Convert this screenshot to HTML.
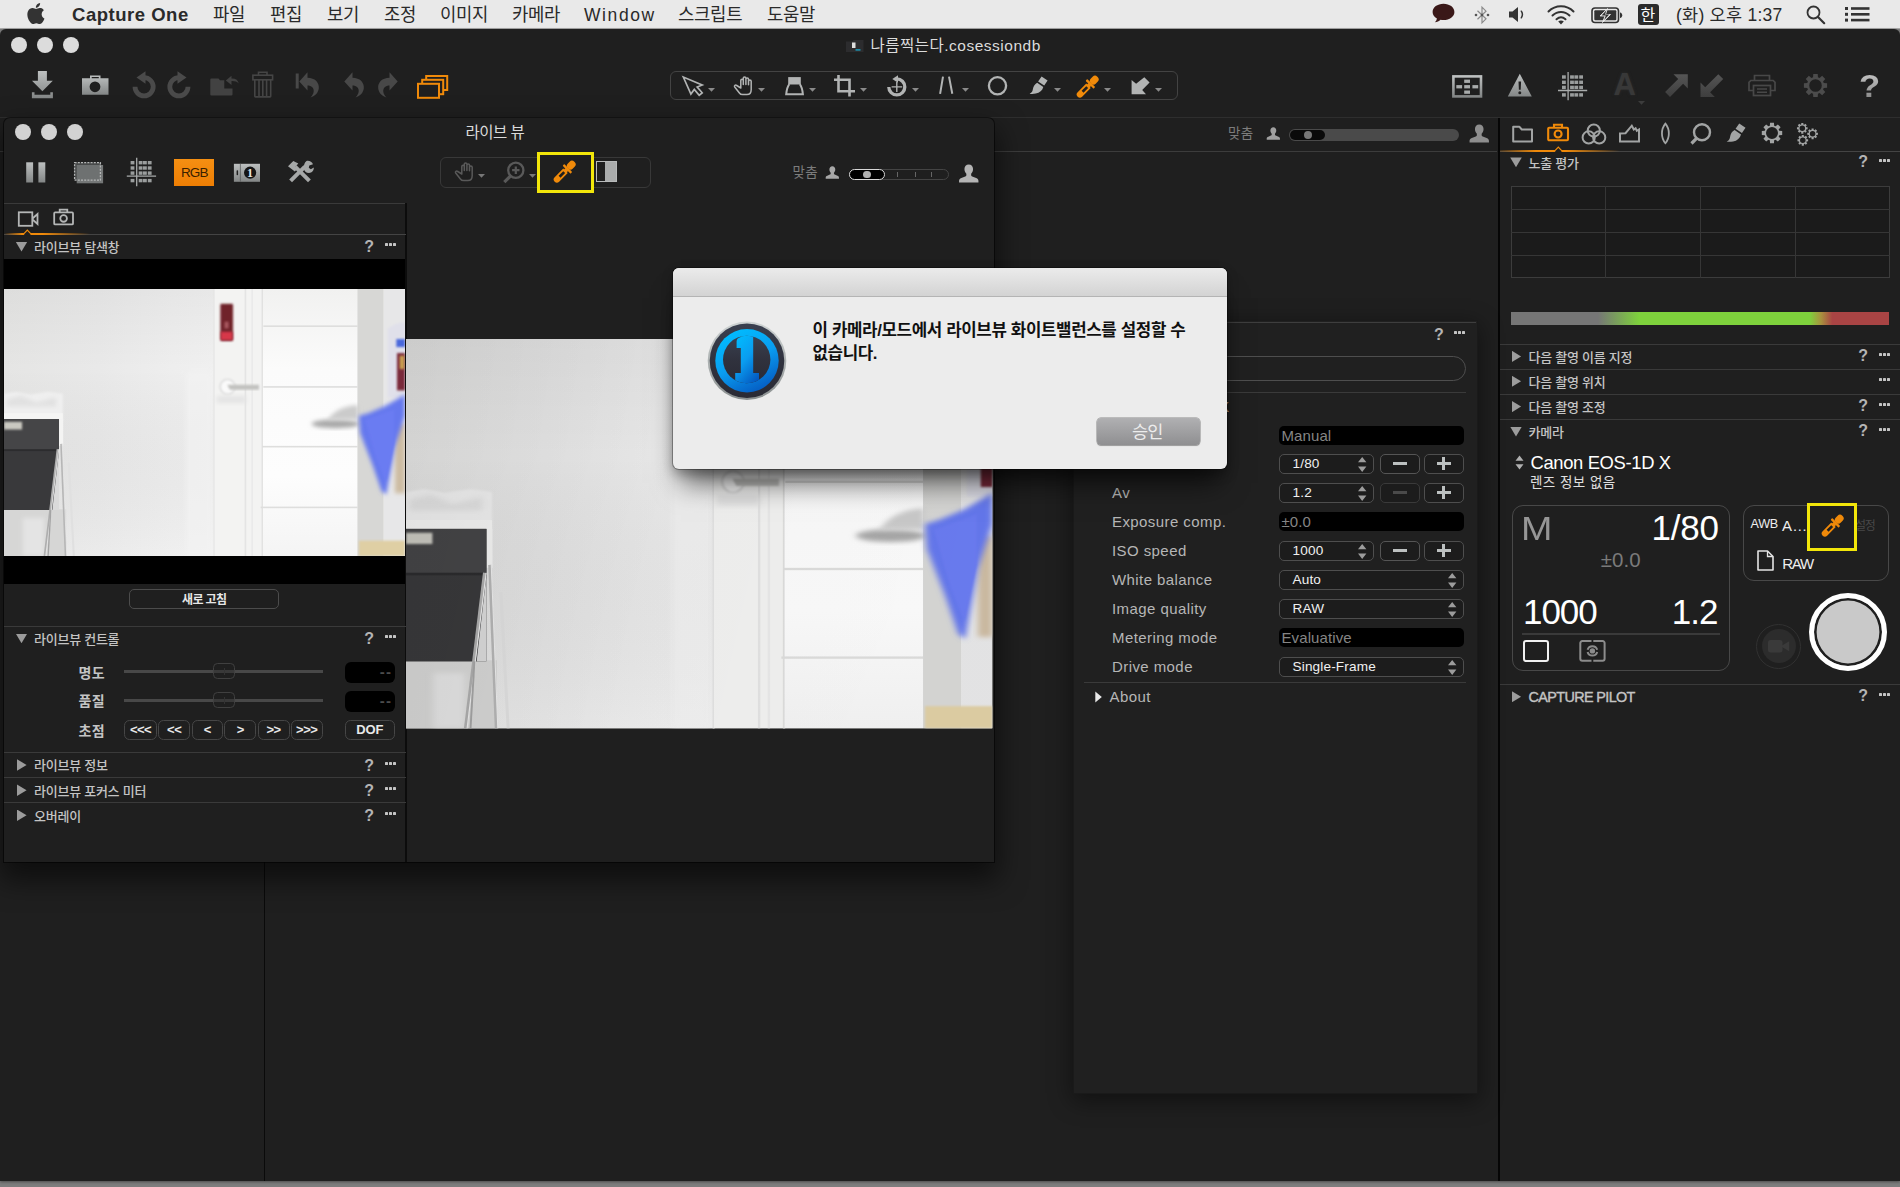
<!DOCTYPE html>
<html lang="ko"><head><meta charset="utf-8"><title>Capture One</title>
<style>
*{box-sizing:border-box;margin:0;padding:0}
html,body{width:1900px;height:1187px;overflow:hidden}
body{position:relative;background:#7d7d7d;font-family:"Liberation Sans","Noto Sans CJK KR",sans-serif;color:#ccc;font-size:13px;line-height:1}
.abs{position:absolute}
svg{position:absolute;overflow:visible}
.t{position:absolute;white-space:nowrap}
#menubar{position:absolute;left:0;top:0;width:1900px;height:29px;background:#e9e9e9;border-bottom:1px solid #a8a8a8;color:#222}
#menubar .t{font-size:17.5px;top:4px;line-height:20px;color:#2a2a2a}
#mainwin{position:absolute;left:0;top:29px;width:1900px;height:1152px;background:#1f1f1f;border-radius:6px 6px 0 0;box-shadow:0 1px 3px rgba(0,0,0,.4)}
.tl{position:absolute;width:16px;height:16px;border-radius:50%;background:#dcdcdc}
.hline{position:absolute;height:1.6px;background:#3b3b3b}
.vline{position:absolute;width:1px;background:#000}
.hdr{position:absolute;font-size:13px;letter-spacing:-.25px;font-weight:500;color:#c4c4c4;line-height:16px;white-space:nowrap}
.tri-d{position:absolute;width:11.6px;height:9.8px;background:#9c9c9c;clip-path:polygon(0 0,100% 0,50% 100%);margin-left:-.3px}
.tri-r{position:absolute;width:9.6px;height:11.6px;background:#9c9c9c;clip-path:polygon(0 0,100% 50%,0 100%);margin-top:-.3px}
.q{position:absolute;font-size:16px;font-weight:bold;color:#b4b4b4;line-height:16px}
.dots{position:absolute;width:11px;height:3px}
.dots i{position:absolute;top:0;width:3px;height:3px;background:#c4c4c4;border-radius:.6px}

.lab{font-size:15px;line-height:19px;color:#b6b6b6;letter-spacing:.42px}
.blk{width:185px;height:19px;background:#000;border-radius:5px}
.blk span{position:absolute;left:3px;top:0;font-size:15px;line-height:19px;color:#858585;letter-spacing:.1px}
.sel{height:20px;border:1px solid #4e4e4e;border-radius:5px;background:#1c1c1c}
.sel span{position:absolute;top:-1.200px;font-size:13.600px;letter-spacing:.15px;line-height:19px;color:#f0f0f0}
.btn{width:39.500px;height:20px;border:1px solid #4e4e4e;border-radius:5px;background:#1c1c1c}
.btn i{position:absolute;display:block}

.sl{font-size:14px;line-height:18px;font-weight:bold;color:#c4c4c4;letter-spacing:.3px}
.fb{height:20.500px;border:1px solid #464646;border-radius:5.500px;text-align:center;font-size:13px;line-height:18.500px;font-weight:bold;color:#e8e8e8;letter-spacing:-.5px}

</style></head>
<body>
<!-- defs.html -->
<svg width="0" height="0" style="position:absolute">
<defs>
<linearGradient id="gLite" x1="0" y1="0" x2="0" y2="1"><stop offset="0" stop-color="#bdc0c0"/><stop offset="1" stop-color="#838686"/></linearGradient>
<linearGradient id="gDim" x1="0" y1="0" x2="0" y2="1"><stop offset="0" stop-color="#555"/><stop offset="1" stop-color="#3e3e3e"/></linearGradient>
<linearGradient id="gOr" x1="0" y1="0" x2="0" y2="1"><stop offset="0" stop-color="#f59a1c"/><stop offset="1" stop-color="#e67a08"/></linearGradient>
</defs>
</svg>
<svg width="0" height="0" style="position:absolute">
<defs>
<g id="pip"><rect x="-3.500" y="0" width="7" height="9" rx="3.300"/><rect x="-5.500" y="8.700" width="11" height="2.300" rx=".7"/><rect x="-1.900" y="10.500" width="3.800" height="3"/><path fill-rule="evenodd" d="M-3.100 12.500h6.200v11.900a3.100 3.100 0 0 1-6.200 0zM-1.300 14.300v6.400h2.600v-6.400z"/></g>
<g id="person"><path d="M10 .5c2.600 0 4.300 1.900 4.300 4.600 0 1.900-.8 3.600-1.900 4.600v1.500c0 .7.400 1.100 1.100 1.400l3.900 1.500c1.600.6 2.300 1.500 2.300 3v1.400H.3v-1.400c0-1.500.7-2.400 2.300-3l3.900-1.500c.7-.3 1.100-.7 1.100-1.400V9.700C6.500 8.700 5.700 7 5.700 5.100 5.700 2.400 7.400 .5 10 .5z"/></g>
</defs>
</svg>
<svg width="0" height="0" style="position:absolute">
<defs>
<filter id="b1" x="-20%" y="-20%" width="140%" height="140%"><feGaussianBlur stdDeviation="1.2"/></filter>
<filter id="b2" x="-30%" y="-30%" width="160%" height="160%"><feGaussianBlur stdDeviation="3"/></filter>
<filter id="b3" x="-30%" y="-30%" width="160%" height="160%"><feGaussianBlur stdDeviation="6"/></filter>
<linearGradient id="wallg" x1="0" y1="0" x2="1" y2="0"><stop offset="0" stop-color="#e5e5e4"/><stop offset=".45" stop-color="#e9e9e9"/><stop offset=".8" stop-color="#eeeeee"/><stop offset="1" stop-color="#f0f0f0"/></linearGradient>
<linearGradient id="wallv" x1="0" y1="0" x2="0" y2="1"><stop offset="0" stop-color="#000" stop-opacity=".035"/><stop offset=".3" stop-color="#000" stop-opacity="0"/><stop offset="1" stop-color="#fff" stop-opacity=".1"/></linearGradient>
<linearGradient id="doorg" x1="0" y1="0" x2="0" y2="1"><stop offset="0" stop-color="#f1f1f0"/><stop offset=".3" stop-color="#fbfbfb"/><stop offset=".7" stop-color="#fdfdfd"/><stop offset="1" stop-color="#f4f4f4"/></linearGradient>
<symbol id="photo" viewBox="0 0 600 400" preserveAspectRatio="none">
<rect width="600" height="400" fill="#e9e9e8"/>
<rect width="316" height="400" fill="url(#wallg)"/>
<rect width="316" height="400" fill="url(#wallv)"/>
<rect x="272" y="125" width="40" height="275" fill="#f3f3f3" opacity=".65" filter="url(#b2)"/>
<!-- door frame -->
<rect x="314" y="0" width="74" height="400" fill="#f3f3f2"/>
<rect x="313.500" y="0" width="1.500" height="400" fill="#e2e2e2"/>
<rect x="360" y="0" width="2.500" height="400" fill="#e4e4e4"/>
<rect x="370" y="0" width="2.500" height="400" fill="#eaeaea"/>
<!-- door -->
<rect x="386" y="0" width="143" height="400" fill="url(#doorg)"/>
<g fill="#dededd"><rect x="388" y="54.500" width="141" height="2.400"/><rect x="388" y="145.500" width="141" height="2.400"/><rect x="386" y="235" width="143" height="2.400"/><rect x="384" y="326" width="145" height="2.400"/><rect x="385.500" y="0" width="1.800" height="400"/></g>
<!-- right region -->
<rect x="529" y="0" width="39" height="400" fill="#d7d7d5"/>
<rect x="568" y="0" width="32" height="400" fill="#e7e7e8"/>
<path d="M574 60c8-8 18-10 26-10v112h-26z" fill="#e0e0ea" filter="url(#b1)"/>
<rect x="587" y="75" width="13" height="12" fill="#4a68dc" filter="url(#b1)"/>
<rect x="588" y="96" width="12" height="56" fill="#7a2a3a" filter="url(#b1)"/>
<rect x="592" y="100" width="7" height="20" fill="#c9a050" filter="url(#b1)"/>
<rect x="585" y="202" width="15" height="104" fill="#cdbca2" filter="url(#b2)"/>
<rect x="531" y="377" width="69" height="23" fill="#dfcfa4" filter="url(#b1)"/>
<!-- red box -->
<rect x="323.700" y="22" width="19" height="56" rx="2" fill="#70202a" filter="url(#b1)"/>
<rect x="324.500" y="64" width="17.500" height="12.500" fill="#d6384a" filter="url(#b1)"/>
<rect x="330" y="49" width="6" height="10" fill="#a85860" filter="url(#b1)"/>
<!-- handle -->
<rect x="318" y="160" width="44" height="11" fill="#e4e4e4" filter="url(#b2)"/>
<circle cx="334.500" cy="146.500" r="11" fill="#fafafa" stroke="#d6d6d6" stroke-width="2" filter="url(#b1)"/>
<path d="M334 143.500h47.500v7.500H338z" fill="#c2c2c0" filter="url(#b1)"/>
<!-- plastic + black box + chair -->
<path d="M0 157l18-3 22 4 26-4 22 3v40H0z" fill="#efefef" filter="url(#b1)"/>
<path d="M4 165l22-5 22 10 30-8v14H4z" fill="#d6d6d6" opacity=".55" filter="url(#b2)"/>
<rect x="0" y="186" width="88" height="10" fill="#f5f5f4"/>
<rect x="0" y="330" width="93" height="70" fill="#d6d6d5"/>
<rect x="28" y="343" width="32" height="57" fill="#e4e4e4" filter="url(#b2)"/>
<rect x="82" y="195" width="6.500" height="40" fill="#f4f4f3"/>
<rect x="0" y="195" width="82.300" height="136" fill="#3a3a3c"/>
<rect x="0" y="195" width="82.300" height="46" fill="#454547"/>
<rect x="0" y="240" width="82.300" height="3" fill="#2c2c2e"/>
<path d="M0 243h82.300l-10 88H0z" fill="#39393b"/>
<path d="M72.300 331l10-88v88z" fill="#dadada"/>
<rect x="0" y="199" width="27" height="11.500" fill="#cac9c1" filter="url(#b1)"/>
<g stroke-linecap="butt" fill="none"><path d="M80.500 240L61 400" stroke="#aeaeae" stroke-width="3.500"/><path d="M82 240L62.500 400" stroke="#ededed" stroke-width="1.200"/><path d="M85.700 232l6.700 168" stroke="#b6b6b6" stroke-width="3.200"/><path d="M87.200 232l6.700 168" stroke="#f0f0f0" stroke-width="1"/><path d="M70 331l-4 69" stroke="#a4a4a4" stroke-width="2"/><path d="M97 260l7.500 140" stroke="#e0e0e0" stroke-width="3"/></g>
<!-- shoe shadow -->
<ellipse cx="496" cy="202" rx="36" ry="6.500" fill="#a9a9a9" filter="url(#b2)"/>
<path d="M484 196c8-12 24-22 46-22v22z" fill="#cbcbcb" filter="url(#b2)"/>
<!-- blue blob -->
<path d="M531 190L545 186 571 175 600 158V190L585 236 572 308 565 303 552 265 533 216z" fill="#6578ee" filter="url(#b2)"/>
<path d="M540 196L584 180 584 232 571 290 556 252z" fill="#6a7cf2" filter="url(#b1)"/>
</symbol>
</defs>
</svg>
<svg width="0" height="0" style="position:absolute"><defs>
<linearGradient id="bigshade" x1="0" y1="0" x2="1" y2=".15"><stop offset="0" stop-color="#000" stop-opacity=".08"/><stop offset=".5" stop-color="#000" stop-opacity=".03"/><stop offset="1" stop-color="#000" stop-opacity=".02"/></linearGradient>
</defs></svg>

<!-- menubar.html -->
<div id="menubar">
<svg style="left:27px;top:3px" width="18" height="21" viewBox="3 0 18.2 24"><path fill="#333" d="M12.152 6.896c-.948 0-2.415-1.078-3.96-1.04-2.04.027-3.91 1.183-4.961 3.014-2.117 3.675-.546 9.103 1.519 12.09 1.013 1.454 2.208 3.09 3.792 3.039 1.52-.065 2.09-.987 3.935-.987 1.831 0 2.35.987 3.96.948 1.637-.026 2.676-1.48 3.676-2.948 1.156-1.688 1.636-3.325 1.662-3.415-.039-.013-3.182-1.221-3.22-4.857-.026-3.04 2.48-4.494 2.597-4.559-1.429-2.09-3.623-2.324-4.39-2.376-2-.156-3.675 1.09-4.61 1.09zM15.53 3.83c.843-1.012 1.4-2.427 1.245-3.83-1.207.052-2.662.805-3.532 1.818-.78.896-1.454 2.338-1.273 3.714 1.338.104 2.715-.688 3.559-1.701"/></svg>
<span class="t" id="m0" style="left:72px;font-weight:bold;font-size:18.5px;letter-spacing:.52px;top:4.5px">Capture One</span>
<span class="t" id="m1" style="left:213px;top:5px;font-size:17.8px;letter-spacing:-.3px">파일</span>
<span class="t" id="m2" style="left:270px;top:5px;font-size:17.8px;letter-spacing:-.3px">편집</span>
<span class="t" id="m3" style="left:327px;top:5px;font-size:17.8px;letter-spacing:-.3px">보기</span>
<span class="t" id="m4" style="left:384px;top:5px;font-size:17.8px;letter-spacing:-.3px">조정</span>
<span class="t" id="m5" style="left:440px;top:5px;font-size:17.8px;letter-spacing:-.3px">이미지</span>
<span class="t" id="m6" style="left:512px;top:5px;font-size:17.8px;letter-spacing:-.3px">카메라</span>
<span class="t" id="m7" style="left:584px;letter-spacing:1.6px;top:5px">Window</span>
<span class="t" id="m8" style="left:678px;top:5px;font-size:17.8px;letter-spacing:-.3px">스크립트</span>
<span class="t" id="m9" style="left:767px;top:5px;font-size:17.8px;letter-spacing:-.3px">도움말</span>
<!-- status icons -->
<svg style="left:1432px;top:3px" width="23" height="21" viewBox="0 0 23 21"><path fill="#3a1818" d="M11.5 .8C5.4 .8 .6 4.400 .6 8.900c0 2.700 1.700 5 4.300 6.500-.2 1.500-1 2.900-2.100 3.900 2.300-.1 4.300-1 5.700-2.500 1 .2 2 .3 3 .3 6.100 0 10.900-3.700 10.900-8.200S17.600 .8 11.500 .8z"/></svg>
<svg style="left:1474px;top:5px" width="16" height="20" viewBox="0 0 16 20"><path fill="none" stroke="#8a8a8a" stroke-width="1.2" d="M3.500 5.800 12 13.800 8 17.800V2.200l4 4-8.500 8"/><circle cx="2" cy="10" r="1.300" fill="#555"/><circle cx="14" cy="10" r="1.300" fill="#555"/><circle cx="8" cy="10" r="1.300" fill="#555"/></svg>
<svg style="left:1508px;top:6px" width="19" height="17" viewBox="0 0 19 17"><path fill="#333" d="M1 5.500h3.500L10 1v15L4.500 11.500H1z"/><path fill="none" stroke="#333" stroke-width="1.500" stroke-linecap="round" d="M13.300 5.200c1.300 1.900 1.300 4.700 0 6.600"/></svg>
<svg style="left:1547px;top:4px" width="28" height="21" viewBox="0 0 28 21"><g fill="none" stroke="#333" stroke-width="2" stroke-linecap="round"><path d="M1.500 7.500C8.500 .5 19.500 .5 26.500 7.500"/><path d="M5.500 11.500C10.500 6.700 17.500 6.700 22.500 11.500"/><path d="M9.500 15.300C12.200 12.900 15.800 12.900 18.500 15.300"/></g><path fill="#333" d="M14 20.500l-2.800-3c1.600-1.300 4-1.300 5.600 0z"/></svg>
<svg style="left:1591px;top:7px" width="32" height="17" viewBox="0 0 32 17"><rect x="1" y="1" width="26.500" height="14.500" rx="3" fill="none" stroke="#333" stroke-width="1.600"/><path fill="#333" d="M29 5.500c1.500.3 2.200 1.300 2.200 2.800s-.7 2.500-2.200 2.800z"/><rect x="3.300" y="3.300" width="22" height="10" rx="1" fill="#333"/><path fill="#ececec" stroke="#ececec" stroke-width=".8" d="M16.500 1.500 9 9h5l-2.500 6.500L19.500 7.500h-5z"/><path fill="#333" d="M15.500 3.200 10.500 8.400h4.300l-1.600 4.500 5-5.400h-4.200z"/></svg>
<div class="abs" style="left:1638px;top:4px;width:21px;height:21px;background:#2b2b2b;border-radius:3px"></div>
<span class="t" id="m10" style="left:1640.500px;color:#fff;font-size:16px;top:5.500px">한</span>
<span class="t" id="m11" style="left:1676px;letter-spacing:.25px;top:5px">(화) 오후 1:37</span>
<svg style="left:1806px;top:5px" width="20" height="20" viewBox="0 0 20 20"><circle cx="7.500" cy="7.500" r="6" fill="none" stroke="#333" stroke-width="1.800"/><path stroke="#333" stroke-width="2.200" stroke-linecap="round" d="M12 12l6.200 6.200"/></svg>
<svg style="left:1845px;top:7px" width="25" height="15" viewBox="0 0 25 15"><g fill="#333"><rect x="0" y="0" width="3" height="3"/><rect x="0" y="5.800" width="3" height="3"/><rect x="0" y="11.600" width="3" height="3"/><rect x="6" y=".2" width="18.500" height="2.600"/><rect x="6" y="6" width="18.500" height="2.600"/><rect x="6" y="11.800" width="18.500" height="2.600"/></g></svg>
</div>

<!-- mainwin.html -->
<div id="mainwin"></div>
<div class="tl" style="left:10.500px;top:37px"></div><div class="tl" style="left:36.800px;top:37px"></div><div class="tl" style="left:63px;top:37px"></div>
<!-- title -->
<svg style="left:846px;top:39px" width="18" height="14" viewBox="0 0 18 14"><path fill="#2c2c2e" d="M0 2.500h6l1.500-1.500h10v12H0z"/><rect x="6" y="3.500" width="3.500" height="5.500" fill="#ddd"/><rect x="9.500" y="10.200" width="5" height="1.400" fill="#1aa0c0"/></svg>
<span class="t" id="title" style="left:870.5px;top:36.5px;font-size:15.5px;line-height:18px;color:#dcdcdc;letter-spacing:.5px">나름찍는다.cosessiondb</span>
<!-- left toolbar icons -->
<svg style="left:31px;top:70px" width="23" height="29" viewBox="0 0 23 29"><path fill="url(#gLite)" d="M6.900 1h9v9.800h5.900L11.400 21.200 1 10.800h5.900zM.9 22.3h2.6v2.4h15.8v-2.4h2.6v5.9H.9z"/></svg>
<svg style="left:82px;top:75px" width="27" height="20" viewBox="0 0 27 20"><path fill="url(#gLite)" fill-rule="evenodd" d="M0 3.300h8V.5h10.500v2.800h8v16.400H0zM9.700 1.900v1.400h7.100V1.900zM13 6.400a5.400 5.400 0 1 0 0 10.800 5.400 5.400 0 0 0 0-10.800z"/></svg>
<svg style="left:132px;top:71px" width="25" height="27" viewBox="0 0 25 27"><path fill="none" stroke="#4a4a4a" stroke-width="4.800" d="M12.100 6.700a9.100 9.100 0 1 1-9.100 9.100"/><path fill="#4a4a4a" d="M13.500 .3v12.400L4.500 6.500z"/></svg>
<svg style="left:166px;top:71px" width="25" height="27" viewBox="0 0 25 27"><g transform="translate(25,0) scale(-1,1)"><path fill="none" stroke="#4a4a4a" stroke-width="4.800" d="M12.100 6.700a9.100 9.100 0 1 1-9.100 9.100"/><path fill="#4a4a4a" d="M13.500 .3v12.400L4.500 6.500z"/></g></svg>
<svg style="left:210px;top:75px" width="30" height="21" viewBox="0 0 30 21"><path fill="#424242" d="M.3 4.500q0-1 1-1h7.200l1.500 1.800h4.300v8.300h8.200v5.900q0 1-1 1H1.300q-1 0-1-1z"/><path fill="#424242" d="M15.800 5.500l5.700-4.700v2.600c4.200-.2 6.600 1.800 7.200 5-1.700-1.800-3.900-2.400-7.200-2.300v4z"/></svg>
<svg style="left:252px;top:71px" width="22" height="27" viewBox="0 0 22 27"><g fill="none" stroke="#454545" stroke-width="1.600"><path d="M6.500 4V1.200h8.500V4"/><rect x=".9" y="4.200" width="19.700" height="4.600"/><path d="M2.800 8.800v16.500q0 .6.600.6h14.700q.6 0 .6-.6V8.800"/><path d="M7 9v16.500M10.800 9v16.500M14.600 9v16.500"/></g></svg>
<svg style="left:295px;top:72px" width="25" height="26" viewBox="0 0 25 26"><rect x=".7" y="1.500" width="3" height="15" fill="#484848"/><path fill="#484848" d="M4.300 9.400 12.500 .3v5.400c7.500.2 11.800 4.600 11.300 10.500-.4 4.300-3.500 7.700-8.300 9.300 3.500-3.400 4.300-7.800 1.800-10.300-1.300-1.200-2.800-1.700-4.800-1.700v5z"/></svg>
<svg style="left:342px;top:72px" width="24" height="26" viewBox="3.500 0 21 26"><path fill="#484848" d="M4.300 9.400 12.500 .3v5.400c7.500.2 11.800 4.600 11.300 10.500-.4 4.300-3.500 7.700-8.300 9.300 3.500-3.400 4.300-7.800 1.800-10.300-1.300-1.200-2.800-1.700-4.800-1.700v5z"/></svg>
<svg style="left:375.500px;top:72px" width="24" height="26" viewBox="3.500 0 21 26"><g transform="translate(28,0) scale(-1,1)"><path fill="#484848" d="M4.300 9.400 12.500 .3v5.400c7.500.2 11.800 4.600 11.300 10.500-.4 4.300-3.500 7.700-8.300 9.300 3.500-3.400 4.300-7.800 1.800-10.300-1.300-1.200-2.800-1.700-4.800-1.700v5z"/></g></svg>
<svg style="left:416px;top:74px" width="33" height="25" viewBox="0 0 33 25"><g fill="#1f1f1f" stroke="#f08a0a" stroke-width="2"><rect x="10.200" y="2" width="21" height="14"/><rect x="6.200" y="5.800" width="21" height="14.400"/><rect x="2" y="9.800" width="21" height="14"/></g></svg>
<div class="hline" style="left:0;top:117px;width:1900px;height:1px;background:#2e2e2e"></div>
<!-- center cursor tools -->
<div class="abs" style="left:669.500px;top:70.500px;width:508px;height:29.500px;border:1px solid #434343;border-radius:6px"></div>
<svg style="left:682px;top:75px" width="22" height="22" viewBox="682 75 22 22"><path fill="none" stroke="#b2b4b4" stroke-width="1.700" stroke-linejoin="miter" d="M683.300 77l7.600 17 3.400-4.600 4.900 5.800 3-2.400-5-5.800 5-2z"/></svg>
<svg style="left:708.1px;top:88.2px" width="7" height="4" viewBox="0 0 7 4"><path fill="#8a8a8a" d="M0 0h7L3.500 3.800z"/></svg>
<svg style="left:733px;top:76px" width="20" height="19" viewBox="0 0 20 19"><path fill="none" stroke="#b2b4b4" stroke-width="1.500" stroke-linejoin="round" stroke-linecap="round" d="M7.800 12V4.400c0-1.600 2.500-1.600 2.500 0v4.100V2.100c0-1.600 2.600-1.600 2.600 0v6.400V3.100c0-1.600 2.600-1.600 2.600 0v5.700V5.200c0-1.600 2.700-1.600 2.700 0v8.300c0 3-1.600 5.100-4.300 5.100H9.600c-1.600 0-2.500-.6-3.400-1.900L1.700 11c-.9-1.400.9-2.700 2-1.500z"/></svg>
<svg style="left:758.3px;top:88.2px" width="7" height="4" viewBox="0 0 7 4"><path fill="#8a8a8a" d="M0 0h7L3.500 3.800z"/></svg>
<svg style="left:784px;top:76px" width="22" height="20" viewBox="0 0 22 20"><rect x="4.200" y="1.100" width="12.600" height="7.400" fill="#b2b4b4"/><path fill="none" stroke="#b2b4b4" stroke-width="2" d="M5.300 8.200C3.500 10.500 2.600 14.500 2.200 18.300H18.900C18.500 14.500 17.600 10.500 15.800 8.200"/></svg>
<svg style="left:809.4px;top:88.2px" width="7" height="4" viewBox="0 0 7 4"><path fill="#8a8a8a" d="M0 0h7L3.500 3.800z"/></svg>
<svg style="left:833px;top:75px" width="23" height="22" viewBox="0 0 23 22"><path fill="none" stroke="#b2b4b4" stroke-width="2.600" d="M5.500 0v16.300H22M1 4.800h15.500V21.500"/></svg>
<svg style="left:859.5px;top:88.2px" width="7" height="4" viewBox="0 0 7 4"><path fill="#8a8a8a" d="M0 0h7L3.500 3.800z"/></svg>
<svg style="left:885.600px;top:74px" width="23" height="24" viewBox="0 0 23 24"><path fill="none" stroke="#b2b4b4" stroke-width="3.300" d="M10.800 4.900A8 8 0 1 1 2.800 12.900"/><path fill="#b2b4b4" d="M12 1.200v7.600L6.300 4.900z"/><path fill="none" stroke="#b2b4b4" stroke-width="1.400" d="M10.800 8v10M5.600 12.900h10.600"/></svg>
<svg style="left:911.5px;top:88.2px" width="7" height="4" viewBox="0 0 7 4"><path fill="#8a8a8a" d="M0 0h7L3.500 3.800z"/></svg>
<svg style="left:938px;top:76px" width="16" height="19" viewBox="938 76 16 19"><path fill="none" stroke="#b2b4b4" stroke-width="2" d="M943 76.600l-2.900 17.200M949 76.600l3.300 17.200"/></svg>
<svg style="left:961.5px;top:88.2px" width="7" height="4" viewBox="0 0 7 4"><path fill="#8a8a8a" d="M0 0h7L3.500 3.800z"/></svg>
<svg style="left:987px;top:75px" width="22" height="22" viewBox="0 0 22 22"><circle cx="10.500" cy="10.800" r="8.600" fill="none" stroke="#b2b4b4" stroke-width="2.300"/></svg>
<svg style="left:1029px;top:76px" width="20" height="19" viewBox="0 0 20 19"><path fill="#b2b4b4" d="M12.600 .5l6 4.100-3.400 4.900-6.100-4.100zM8.200 6.700l6.100 4.200c-.9 3.400-3.600 6-7.600 6.700-2.200.4-4.500.4-6.100.1 2.400-1.100 3-2.700 3.300-4.700.4-2.500 1.800-4.900 4.300-6.300z"/></svg>
<svg style="left:1053.5px;top:88.2px" width="7" height="4" viewBox="0 0 7 4"><path fill="#8a8a8a" d="M0 0h7L3.500 3.800z"/></svg>
<svg style="left:1077px;top:75px" width="24" height="23" viewBox="0 0 24 23"><use href="#pip" fill="#f08a0a" transform="translate(20.500,1.800) rotate(45) scale(1.020)"/></svg>
<svg style="left:1103.5px;top:88.2px" width="7" height="4" viewBox="0 0 7 4"><path fill="#8a8a8a" d="M0 0h7L3.500 3.800z"/></svg>
<svg style="left:1131px;top:77px" width="19" height="18" viewBox="0 0 19 18"><path fill="#b2b4b4" d="M13.300 .3l5.300 5.300-7.400 7.400 3.800 4.300H.6V3.100l4.500 3.700z"/></svg>
<svg style="left:1155.2px;top:88.2px" width="7" height="4" viewBox="0 0 7 4"><path fill="#8a8a8a" d="M0 0h7L3.500 3.800z"/></svg>
<svg style="left:1451px;top:74px" width="33" height="25" viewBox="1451 74 33 25"><rect x="1453.400" y="76.400" width="27.600" height="20" fill="none" stroke="url(#gLite)" stroke-width="2.600"/><rect x="1464.2" y="79.6" width="5.800" height="3.300" fill="#a8abab"/><rect x="1456.3" y="85.1" width="5.800" height="3.300" fill="#a8abab"/><rect x="1464.2" y="85.1" width="5.800" height="3.300" fill="#a8abab"/><rect x="1472.4" y="85.1" width="5.800" height="3.300" fill="#a8abab"/><rect x="1464.2" y="90.5" width="5.800" height="3.300" fill="#a8abab"/></svg>
<svg style="left:1507px;top:73px" width="26" height="24" viewBox="0 0 26 24"><path fill="url(#gLite)" fill-rule="evenodd" d="M12.800 .8L24.800 23.500H.8zM11.500 8.500l.4 8.300h1.800l.4-8.300zM12.800 18.200a1.500 1.500 0 1 0 0 3 1.500 1.500 0 0 0 0-3z"/></svg>
<svg style="left:1557px;top:71px" width="31" height="30" viewBox="1557 71 31 30"><rect x="1562" y="75.3" width="3.800" height="3.400" fill="#9a9d9d"/><rect x="1562" y="80.6" width="3.800" height="3.400" fill="#9a9d9d"/><rect x="1562" y="85.7" width="3.800" height="3.400" fill="#9a9d9d"/><rect x="1562" y="93.2" width="3.800" height="3.400" fill="#9a9d9d"/><rect x="1570.1" y="75.3" width="3.800" height="3.400" fill="#9a9d9d"/><rect x="1570.1" y="80.6" width="3.800" height="3.400" fill="#9a9d9d"/><rect x="1570.1" y="85.7" width="3.800" height="3.400" fill="#9a9d9d"/><rect x="1570.1" y="93.2" width="3.800" height="3.400" fill="#9a9d9d"/><rect x="1574.4" y="75.3" width="3.800" height="3.400" fill="#9a9d9d"/><rect x="1574.4" y="80.6" width="3.800" height="3.400" fill="#9a9d9d"/><rect x="1574.4" y="85.7" width="3.800" height="3.400" fill="#9a9d9d"/><rect x="1574.4" y="93.2" width="3.800" height="3.400" fill="#9a9d9d"/><rect x="1579.2" y="75.3" width="3.800" height="3.400" fill="#9a9d9d"/><rect x="1579.2" y="80.6" width="3.800" height="3.400" fill="#9a9d9d"/><rect x="1579.2" y="85.7" width="3.800" height="3.400" fill="#9a9d9d"/><rect x="1579.2" y="93.2" width="3.800" height="3.400" fill="#9a9d9d"/><path stroke="#a8abab" stroke-width="1.300" d="M1568.100 72v28.300M1558 90.500h29.200"/></svg>
<span class="t" style="left:1613.500px;top:68px;font-size:31px;line-height:34px;font-weight:bold;color:#383838;text-shadow:0 0 3px #2c2c2c">A</span>
<svg style="left:1637.500px;top:100.800px" width="7" height="4" viewBox="0 0 7 4"><path fill="#3c3c3c" d="M0 0h7L3.500 3.800z"/></svg>
<svg style="left:1664px;top:73px" width="25" height="25" viewBox="0 0 25 25"><path fill="url(#gDim)" d="M9.500 1.200h14.300v14.300l-4.700-4.700L6 23.900 1.100 19 14.200 5.900z"/></svg>
<svg style="left:1699px;top:73px" width="25" height="25" viewBox="0 0 25 25"><path fill="url(#gDim)" d="M15.800 23.900H1.500V9.600l4.700 4.700L19.300 1.200l4.900 4.900L11.100 19.200z"/></svg>
<svg style="left:1747px;top:74px" width="30" height="23" viewBox="0 0 30 23"><g fill="none" stroke="#484848" stroke-width="1.700"><path d="M7.500 6.500V1.500h15v5"/><path d="M6.500 16.500H2V8.300l1.800-1.800h22.400L28 8.300v8.200h-4.500"/><rect x="6.500" y="11.500" width="17" height="10"/></g><path stroke="#484848" stroke-width="1.600" d="M10 15h10M10 18.300h10"/></svg>
<svg style="left:1802.500px;top:73.400px" width="25" height="25" viewBox="0 0 25 25"><path fill="#4c4c4c" fill-rule="evenodd" d="M10.04 4.26 L10.27 0.91 L14.73 0.91 L14.96 4.26 L16.59 4.93 L19.12 2.73 L22.27 5.88 L20.07 8.41 L20.74 10.04 L24.09 10.27 L24.09 14.73 L20.74 14.96 L20.07 16.59 L22.27 19.12 L19.12 22.27 L16.59 20.07 L14.96 20.74 L14.73 24.09 L10.27 24.09 L10.04 20.74 L8.41 20.07 L5.88 22.27 L2.73 19.12 L4.93 16.59 L4.26 14.96 L0.91 14.73 L0.91 10.27 L4.26 10.04 L4.93 8.41 L2.73 5.88 L5.88 2.73 L8.41 4.93z M12.500 6.200a6.300 6.300 0 1 0 0 12.600 6.300 6.300 0 0 0 0-12.600z"/></svg>
<span class="t" id="bigq" style="left:1858.800px;top:68.300px;font-size:31.500px;line-height:36px;font-weight:bold;color:#a8a8a8;background:linear-gradient(#d0d0d0,#7c7c7c);-webkit-background-clip:text;background-clip:text;-webkit-text-fill-color:transparent;transform:scaleX(1.1);transform-origin:0 0">?</span>
<!-- viewer fit slider (main window) -->
<span class="t" style="left:1228px;top:124.800px;font-size:13.500px;line-height:17px;color:#7c7c7c;letter-spacing:.4px">맞춤</span>
<svg style="left:1266px;top:126.500px" width="15" height="13" viewBox="0 0 20.500 19"><use href="#person" fill="#a0a0a0"/></svg>
<div class="abs" style="left:1289px;top:129px;width:170px;height:11.500px;border-radius:6px;background:#4a4a4a"></div>
<div class="abs" style="left:1290px;top:130px;width:35px;height:9.500px;border-radius:5px;background:#0a0a0a"></div>
<div class="abs" style="left:1303.500px;top:130.800px;width:8px;height:8px;border-radius:50%;background:#777"></div>
<svg style="left:1469px;top:124px" width="21" height="19" viewBox="0 0 20.500 19"><use href="#person" fill="#8e8e8e"/></svg>
<div class="vline" style="left:264px;top:862px;height:319px;background:#0a0a0a"></div>

<!-- rightpanel.html -->
<div class="abs" style="left:1497.500px;top:118px;width:2px;height:1063px;background:#060606"></div>
<div class="hline" style="left:0;top:150.500px;width:1497px;background:#3c3c3c"></div>
<div class="hline" style="left:1499.500px;top:150.6px;width:401px;background:#444"></div>
<div class="abs" style="left:1499.500px;top:150.300px;width:120px;height:1.800px;background:linear-gradient(90deg,rgba(240,138,10,.15) 0,#f08a0a 30%,#f08a0a 55%,rgba(240,138,10,0) 100%)"></div>
<svg style="left:1552px;top:146px" width="13" height="6" viewBox="0 0 13 6"><path fill="#1f1f1f" stroke="#f08a0a" stroke-width="1.200" d="M0 5.200h2.500L6.300 1.200 10.200 5.200H13"/><path stroke="#1f1f1f" stroke-width="1.600" d="M3.300 5.700h6"/></svg>
<svg style="left:1511px;top:124px" width="24" height="20" viewBox="0 0 24 20"><path fill="none" stroke="#a2a4a4" stroke-width="2" stroke-linejoin="round" d="M2.200 17.400V2.800h6.300l2.300 2.700h10.200v11.900z"/></svg>
<svg style="left:1546px;top:123px" width="24" height="20" viewBox="0 0 24 20"><g fill="none" stroke="#f08a0a" stroke-width="2.100"><rect x="2.200" y="4.700" width="19.800" height="12.600" rx="1"/><path d="M8 4.500V1.800h8v2.700"/><circle cx="12.100" cy="11" r="3.500"/></g></svg>
<svg style="left:1580px;top:122px" width="28" height="23" viewBox="1580 122 28 23"><g fill="none" stroke="#a2a4a4" stroke-width="2"><circle cx="1593.800" cy="130.600" r="6.100"/><circle cx="1588.700" cy="137.400" r="6.100"/><circle cx="1599.200" cy="137.400" r="6.100"/></g></svg>
<svg style="left:1618px;top:123px" width="24" height="21" viewBox="0 0 24 21"><path fill="none" stroke="#a2a4a4" stroke-width="2" stroke-linejoin="miter" d="M2 18.400V10.500l5.500-.3 6.300-7.500 2 3.800 1.800-1.300 1.200 2.600 2.200-1.300v11.900z"/></svg>
<svg style="left:1659px;top:122px" width="13" height="23" viewBox="0 0 13 23"><path fill="none" stroke="#a2a4a4" stroke-width="1.800" d="M6.400 1.600c-4.600 5.600-4.600 14 0 19.600 4.600-5.600 4.600-14 0-19.600z"/></svg>
<svg style="left:1689px;top:122px" width="24" height="23" viewBox="1689 122 24 23"><circle cx="1702" cy="132.300" r="8" fill="none" stroke="#a2a4a4" stroke-width="2.400"/><path stroke="#a2a4a4" stroke-width="3.200" stroke-linecap="butt" d="M1696.800 138.200l-5.300 5.300"/></svg>
<svg style="left:1726px;top:123px" width="21" height="20" viewBox="0 0 20 19"><path fill="#a2a4a4" d="M12.600 .5l6 4.100-3.400 4.900-6.100-4.100zM8.200 6.700l6.100 4.200c-.9 3.400-3.600 6-7.600 6.700-2.200.4-4.500.4-6.100.1 2.400-1.100 3-2.700 3.300-4.700.4-2.500 1.800-4.900 4.300-6.300z"/></svg>
<svg style="left:1760.800px;top:122px" width="22" height="22" viewBox="0 0 25 25"><path fill="#a2a4a4" fill-rule="evenodd" d="M10.04 4.26 L10.27 0.91 L14.73 0.91 L14.96 4.26 L16.59 4.93 L19.12 2.73 L22.27 5.88 L20.07 8.41 L20.74 10.04 L24.09 10.27 L24.09 14.73 L20.74 14.96 L20.07 16.59 L22.27 19.12 L19.12 22.27 L16.59 20.07 L14.96 20.74 L14.73 24.09 L10.27 24.09 L10.04 20.74 L8.41 20.07 L5.88 22.27 L2.73 19.12 L4.93 16.59 L4.26 14.96 L0.91 14.73 L0.91 10.27 L4.26 10.04 L4.93 8.41 L2.73 5.88 L5.88 2.73 L8.41 4.93z M12.500 5.700a6.800 6.800 0 1 0 0 13.600 6.800 6.800 0 0 0 0-13.600z"/></svg>
<svg style="left:1795px;top:121px" width="25" height="25" viewBox="1795 121 25 25"><g transform="translate(1802.3,128.3) scale(0.46) translate(-12.5,-12.500)"><path fill="#a2a4a4" fill-rule="evenodd" d="M10.04 4.26 L10.27 0.91 L14.73 0.91 L14.96 4.26 L16.59 4.93 L19.12 2.73 L22.27 5.88 L20.07 8.41 L20.74 10.04 L24.09 10.27 L24.09 14.73 L20.74 14.96 L20.07 16.59 L22.27 19.12 L19.12 22.27 L16.59 20.07 L14.96 20.74 L14.73 24.09 L10.27 24.09 L10.04 20.74 L8.41 20.07 L5.88 22.27 L2.73 19.12 L4.93 16.59 L4.26 14.96 L0.91 14.73 L0.91 10.27 L4.26 10.04 L4.93 8.41 L2.73 5.88 L5.88 2.73 L8.41 4.93z M12.500 6.500a6 6 0 1 0 0 12 6 6 0 0 0 0-12z"/></g><g transform="translate(1812.6,133.8) scale(0.46) translate(-12.5,-12.500)"><path fill="#a2a4a4" fill-rule="evenodd" d="M10.04 4.26 L10.27 0.91 L14.73 0.91 L14.96 4.26 L16.59 4.93 L19.12 2.73 L22.27 5.88 L20.07 8.41 L20.74 10.04 L24.09 10.27 L24.09 14.73 L20.74 14.96 L20.07 16.59 L22.27 19.12 L19.12 22.27 L16.59 20.07 L14.96 20.74 L14.73 24.09 L10.27 24.09 L10.04 20.74 L8.41 20.07 L5.88 22.27 L2.73 19.12 L4.93 16.59 L4.26 14.96 L0.91 14.73 L0.91 10.27 L4.26 10.04 L4.93 8.41 L2.73 5.88 L5.88 2.73 L8.41 4.93z M12.500 6.500a6 6 0 1 0 0 12 6 6 0 0 0 0-12z"/></g><g transform="translate(1802.8,140.3) scale(0.46) translate(-12.5,-12.500)"><path fill="#a2a4a4" fill-rule="evenodd" d="M10.04 4.26 L10.27 0.91 L14.73 0.91 L14.96 4.26 L16.59 4.93 L19.12 2.73 L22.27 5.88 L20.07 8.41 L20.74 10.04 L24.09 10.27 L24.09 14.73 L20.74 14.96 L20.07 16.59 L22.27 19.12 L19.12 22.27 L16.59 20.07 L14.96 20.74 L14.73 24.09 L10.27 24.09 L10.04 20.74 L8.41 20.07 L5.88 22.27 L2.73 19.12 L4.93 16.59 L4.26 14.96 L0.91 14.73 L0.91 10.27 L4.26 10.04 L4.93 8.41 L2.73 5.88 L5.88 2.73 L8.41 4.93z M12.500 6.500a6 6 0 1 0 0 12 6 6 0 0 0 0-12z"/></g></svg>
<div class="tri-d" style="left:1510.5px;top:157.4px"></div><span class="hdr"  style="left:1528.5px;top:155.7px">노출 평가</span><span class="q" style="left:1858.2px;top:154px">?</span><div class="dots" style="left:1879px;top:158.8px"><i style="left:0"></i><i style="left:4.100px"></i><i style="left:8.200px"></i></div>
<svg style="left:1511px;top:186px" width="379" height="92" viewBox="0 0 379 92"><rect x=".5" y=".5" width="378" height="91" fill="#1b1b1b" stroke="#3c3c3c"/><path stroke="#363636" stroke-width="1" d="M94.500 0v92M189.500 0v92M284.500 0v92M0 23.500h379M0 46.500h379M0 69.500h379"/></svg>
<div class="abs" style="left:1511px;top:311.500px;width:378px;height:13px;background:linear-gradient(90deg,#767676 0,#767676 23%,#7ed13c 34%,#7ed13c 79%,#a8923e 82%,#a94444 85%,#a94444 100%)"></div>
<div class="hline" style="left:1499.500px;top:343.7px;width:401px;background:#3a3a3a"></div>
<div class="hline" style="left:1499.500px;top:368.6px;width:401px;background:#3a3a3a"></div>
<div class="hline" style="left:1499.500px;top:393.5px;width:401px;background:#3a3a3a"></div>
<div class="hline" style="left:1499.500px;top:418.8px;width:401px;background:#3a3a3a"></div>
<div class="hline" style="left:1499.500px;top:683.5px;width:401px;background:#3a3a3a"></div>
<div class="tri-r" style="left:1511.5px;top:350.9px"></div><span class="hdr"  style="left:1528.5px;top:349.7px">다음 촬영 이름 지정</span><span class="q" style="left:1858.2px;top:348px">?</span><div class="dots" style="left:1879px;top:352.8px"><i style="left:0"></i><i style="left:4.100px"></i><i style="left:8.200px"></i></div>
<div class="tri-r" style="left:1511.5px;top:375.8px"></div><span class="hdr"  style="left:1528.5px;top:374.6px">다음 촬영 위치</span><div class="dots" style="left:1879px;top:377.7px"><i style="left:0"></i><i style="left:4.100px"></i><i style="left:8.200px"></i></div>
<div class="tri-r" style="left:1511.5px;top:401.1px"></div><span class="hdr"  style="left:1528.5px;top:399.9px">다음 촬영 조정</span><span class="q" style="left:1858.2px;top:398.2px">?</span><div class="dots" style="left:1879px;top:403px"><i style="left:0"></i><i style="left:4.100px"></i><i style="left:8.200px"></i></div>
<div class="tri-d" style="left:1510.5px;top:426.8px"></div><span class="hdr"  style="left:1528.5px;top:425.1px">카메라</span><span class="q" style="left:1858.2px;top:423.4px">?</span><div class="dots" style="left:1879px;top:428.2px"><i style="left:0"></i><i style="left:4.100px"></i><i style="left:8.200px"></i></div>
<div class="tri-r" style="left:1511.5px;top:691.3px"></div><span class="hdr"  style="left:1528.5px;top:690.1px"><span style="font-size:14.400px;letter-spacing:-.62px;font-weight:normal;-webkit-text-stroke:.4px #c4c4c4;position:relative;top:-1.500px">CAPTURE PILOT</span></span><span class="q" style="left:1858.2px;top:688.4px">?</span><div class="dots" style="left:1879px;top:693.2px"><i style="left:0"></i><i style="left:4.100px"></i><i style="left:8.200px"></i></div>
<svg style="left:1514.500px;top:455px" width="9" height="15" viewBox="0 0 9 15"><path fill="#b0b0b0" d="M4.500 .5L8.500 5.800H.5zM4.500 14.500L8.500 9.200H.5z"/></svg>
<span class="t" id="canon" style="left:1530.500px;top:450.500px;font-size:18.400px;line-height:24px;color:#fff;letter-spacing:-.35px">Canon EOS-1D X</span>
<span class="t" id="lensinfo" style="left:1530px;top:474px;font-size:13.500px;line-height:18px;color:#e0e0e0;letter-spacing:.45px">렌즈 정보 없음</span>
<div class="abs" style="left:1512px;top:505px;width:218px;height:165.500px;border:1px solid #484848;border-radius:11px"></div>
<span class="t" id="cM" style="left:1520.800px;top:508.500px;font-size:32.500px;line-height:40px;color:#969696;transform:scaleX(1.16);transform-origin:0 0">M</span>
<span class="t" id="c180" style="right:181.300px;top:508px;font-size:35px;line-height:40px;color:#fff;letter-spacing:-.2px">1/80</span>
<span class="t" id="cev" style="left:1600.800px;top:547.500px;font-size:20.500px;line-height:24px;color:#7a7a7a">±0.0</span>
<span class="t" id="c1000" style="left:1523px;top:591.500px;font-size:35px;line-height:40px;color:#fff;letter-spacing:-1.050px">1000</span>
<span class="t" id="c12" style="right:182.500px;top:591.500px;font-size:35px;line-height:40px;color:#fff;letter-spacing:-1px">1.2</span>
<div class="hline" style="left:1521.500px;top:633.200px;width:198.500px;background:#3a3a3a;height:1.400px"></div>
<div class="abs" style="left:1522.500px;top:640.200px;width:26.500px;height:21.600px;border:2px solid #f0f0f0;border-radius:3px"></div>
<svg style="left:1579px;top:640px" width="28" height="22" viewBox="0 0 28 22"><g fill="none" stroke="#8c8c8c" stroke-width="2"><path d="M12.500 1.100H3.300a2 2 0 0 0-2 2v15.600a2 2 0 0 0 2 2h9.200M14.300 1.100h9.300a2 2 0 0 1 2 2v15.600a2 2 0 0 1-2 2h-9.300"/><path d="M8.600 9.800a5 5 0 0 1 9.600 0M8.600 12a5 5 0 0 0 9.600 0"/></g><circle cx="13.400" cy="10.900" r="2.700" fill="#8c8c8c"/></svg>
<div class="abs" style="left:1742.500px;top:505px;width:146px;height:75.500px;border:1px solid #484848;border-radius:11px"></div>
<span class="t" style="left:1750.500px;top:516.800px;font-size:12.600px;line-height:14px;color:#eee;letter-spacing:-.3px">AWB</span>
<span class="t" style="left:1782px;top:518px;font-size:15px;line-height:16px;color:#eee;letter-spacing:.3px">A…</span>
<span class="t" style="left:1855px;top:517.500px;font-size:12px;line-height:16px;color:#484848;letter-spacing:-1.200px">설정</span>
<div class="abs" style="left:1807px;top:503px;width:50px;height:47.500px;border:3px solid #f2e60a;background:#1f1f1f"></div>
<svg style="left:1822px;top:514px" width="24" height="23" viewBox="0 0 24 23"><use href="#pip" fill="#f08a0a" transform="translate(20.500,1.800) rotate(45) scale(1.020)"/></svg>
<svg style="left:1757px;top:550px" width="17" height="21" viewBox="0 0 17 21"><path fill="none" stroke="#e4e4e4" stroke-width="1.600" stroke-linejoin="round" d="M1 1h9.500L16 6.500V20H1z"/><path fill="none" stroke="#e4e4e4" stroke-width="1.300" d="M10.500 1v5.500H16"/></svg>
<span class="t" style="left:1782.300px;top:554.500px;font-size:15px;line-height:18px;color:#eee;letter-spacing:-1.300px">RAW</span>
<div class="abs" style="left:1756px;top:623.500px;width:45px;height:45px;border-radius:50%;border:1.600px solid #313131"></div><div class="abs" style="left:1761.500px;top:629px;width:34px;height:34px;border-radius:50%;background:#2c2c2c"></div>
<svg style="left:1768px;top:640px" width="22" height="13" viewBox="0 0 22 13"><rect x="0" y="0" width="14.500" height="12.500" rx="2.500" fill="#3a3a3a"/><path fill="#3a3a3a" d="M14 5.500L21.200 1.200v10.100L14 7z"/></svg>
<div class="abs" style="left:1809.400px;top:592.500px;width:78px;height:78px;border-radius:50%;background:#c9c9c9;border:5.300px solid #fff;box-shadow:inset 0 0 0 2.600px #1f1f1f"></div>

<!-- campanel.html -->
<div class="abs" style="left:1074px;top:321px;width:402.500px;height:772px;background:#202020;box-shadow:0 0 0 1px #1a1a1a,0 6px 22px 2px rgba(0,0,0,.45)"></div>
<div class="hline" style="left:1074px;top:321.500px;width:402px;background:#3e3e3e"></div>
<span class="q" style="left:1434px;top:327.4px">?</span><div class="dots" style="left:1454.2px;top:330.5px"><i style="left:0"></i><i style="left:4.100px"></i><i style="left:8.200px"></i></div>
<div class="abs" style="left:1090px;top:356px;width:376px;height:25px;border:1px solid #4e4e4e;border-radius:12.500px"></div>
<div class="hline" style="left:1084px;top:391.500px;width:382px;background:#3a3a3a"></div>
<span class="t" style="left:1108px;top:398px;font-size:15px;line-height:18px;font-weight:bold;color:#d8c8b8">Canon EOS-1D X</span>
<span class="t lab" id="lab0" style="left:1112px;top:425.7px">Mode</span>
<span class="t lab" id="lab1" style="left:1112px;top:454.4px">Tv</span>
<span class="t lab" id="lab2" style="left:1112px;top:482.9px">Av</span>
<span class="t lab" id="lab3" style="left:1112px;top:511.9px">Exposure comp.</span>
<span class="t lab" id="lab4" style="left:1112px;top:541px">ISO speed</span>
<span class="t lab" id="lab5" style="left:1112px;top:570px">White balance</span>
<span class="t lab" id="lab6" style="left:1112px;top:598.9px">Image quality</span>
<span class="t lab" id="lab7" style="left:1112px;top:627.9px">Metering mode</span>
<span class="t lab" id="lab8" style="left:1112px;top:657.2px">Drive mode</span>
<div class="abs blk" style="left:1278.500px;top:426.1px"><span>Manual</span></div>
<div class="abs sel" style="left:1278.500px;top:454.3px;width:95px"><span style="left:13px">1/80</span><svg style="right:6.400px;top:1.800px" width="8.400" height="15" viewBox="0 0 8.400 15"><path fill="#9c9c9c" d="M4.200 0L8.400 5.300H0zM4.200 15L8.400 9.500H0z"/></svg></div><div class="abs btn" style="left:1380px;top:454.3px;border-color:#555"><i style="left:12px;top:6.900px;width:13.600px;height:3px;background:#bcc0c0"></i></div><div class="abs btn" style="left:1424px;top:454.3px"><i style="left:12.100px;top:6.900px;width:13.600px;height:3px;background:#bcc0c0"></i><i style="left:17.300px;top:1.900px;width:3px;height:13.200px;background:#bcc0c0"></i></div>
<div class="abs sel" style="left:1278.500px;top:482.8px;width:95px"><span style="left:13px">1.2</span><svg style="right:6.400px;top:1.800px" width="8.400" height="15" viewBox="0 0 8.400 15"><path fill="#9c9c9c" d="M4.200 0L8.400 5.300H0zM4.200 15L8.400 9.500H0z"/></svg></div><div class="abs btn" style="left:1380px;top:482.8px;border-color:#3a3a3a"><i style="left:12px;top:6.900px;width:13.600px;height:3px;background:#4a4a4a"></i></div><div class="abs btn" style="left:1424px;top:482.8px"><i style="left:12.100px;top:6.900px;width:13.600px;height:3px;background:#bcc0c0"></i><i style="left:17.300px;top:1.900px;width:3px;height:13.200px;background:#bcc0c0"></i></div>
<div class="abs blk" style="left:1278.500px;top:512.3px"><span>±0.0</span></div>
<div class="abs sel" style="left:1278.500px;top:540.9px;width:95px"><span style="left:13px">1000</span><svg style="right:6.400px;top:1.800px" width="8.400" height="15" viewBox="0 0 8.400 15"><path fill="#9c9c9c" d="M4.200 0L8.400 5.300H0zM4.200 15L8.400 9.500H0z"/></svg></div><div class="abs btn" style="left:1380px;top:540.9px;border-color:#555"><i style="left:12px;top:6.900px;width:13.600px;height:3px;background:#bcc0c0"></i></div><div class="abs btn" style="left:1424px;top:540.9px"><i style="left:12.100px;top:6.900px;width:13.600px;height:3px;background:#bcc0c0"></i><i style="left:17.300px;top:1.900px;width:3px;height:13.200px;background:#bcc0c0"></i></div>
<div class="abs sel" style="left:1278.500px;top:569.9px;width:185px"><span style="left:13px">Auto</span><svg style="right:6.400px;top:1.800px" width="8.400" height="15" viewBox="0 0 8.400 15"><path fill="#9c9c9c" d="M4.200 0L8.400 5.300H0zM4.200 15L8.400 9.500H0z"/></svg></div>
<div class="abs sel" style="left:1278.500px;top:598.8px;width:185px"><span style="left:13px">RAW</span><svg style="right:6.400px;top:1.800px" width="8.400" height="15" viewBox="0 0 8.400 15"><path fill="#9c9c9c" d="M4.200 0L8.400 5.300H0zM4.200 15L8.400 9.500H0z"/></svg></div>
<div class="abs blk" style="left:1278.500px;top:628.3px"><span>Evaluative</span></div>
<div class="abs sel" style="left:1278.500px;top:657.1px;width:185px"><span style="left:13px">Single-Frame</span><svg style="right:6.400px;top:1.800px" width="8.400" height="15" viewBox="0 0 8.400 15"><path fill="#9c9c9c" d="M4.200 0L8.400 5.300H0zM4.200 15L8.400 9.500H0z"/></svg></div>
<div class="hline" style="left:1084px;top:681.500px;width:382px;background:#3a3a3a"></div>
<svg style="left:1094.500px;top:690.500px" width="7" height="12" viewBox="0 0 7 12"><path fill="#e8e8e8" d="M.3 .5L6.800 6 .3 11.500z"/></svg>
<span class="t lab" style="left:1109.500px;top:686.7px">About</span>

<!-- liveview.html -->
<div class="abs" style="left:4px;top:118px;width:990px;height:744px;background:#1f1f1f;border-radius:6px 6px 0 0;box-shadow:0 0 0 1px rgba(0,0,0,.55),0 14px 28px 4px rgba(0,0,0,.55)"></div>
<div class="tl" style="left:14.8px;top:124px;background:#d2d2d2;width:15.800px;height:15.800px"></div>
<div class="tl" style="left:40.9px;top:124px;background:#d2d2d2;width:15.800px;height:15.800px"></div>
<div class="tl" style="left:67.2px;top:124px;background:#d2d2d2;width:15.800px;height:15.800px"></div>
<span class="t" id="lvtitle" style="left:465.500px;top:123.700px;font-size:15.500px;line-height:18px;color:#dadada;letter-spacing:-.5px">라이브 뷰</span>
<svg style="left:26px;top:161.500px" width="20" height="21" viewBox="0 0 20 21"><rect x=".2" y=".3" width="6.900" height="20.200" fill="url(#gLite)"/><rect x="12.400" y=".3" width="6.900" height="20.200" fill="url(#gLite)"/></svg>
<svg style="left:73px;top:161px" width="31" height="23" viewBox="73 161 31 23"><rect x="76.700" y="165" width="26.400" height="18.300" fill="#747777"/><rect x="74.600" y="162.600" width="25.800" height="17.600" fill="#6a6d6d" fill-opacity=".55" stroke="#b4b6b6" stroke-width="1.300" stroke-dasharray="2 1.200"/></svg>
<svg style="left:126px;top:157px" width="31" height="30" viewBox="126 157 31 30"><rect x="130.6" y="161" width="3.800" height="3.400" fill="#9a9d9d"/><rect x="130.6" y="166.3" width="3.800" height="3.400" fill="#9a9d9d"/><rect x="130.6" y="171.4" width="3.800" height="3.400" fill="#9a9d9d"/><rect x="130.6" y="178.9" width="3.800" height="3.400" fill="#9a9d9d"/><rect x="138.7" y="161" width="3.800" height="3.400" fill="#9a9d9d"/><rect x="138.7" y="166.3" width="3.800" height="3.400" fill="#9a9d9d"/><rect x="138.7" y="171.4" width="3.800" height="3.400" fill="#9a9d9d"/><rect x="138.7" y="178.9" width="3.800" height="3.400" fill="#9a9d9d"/><rect x="143" y="161" width="3.800" height="3.400" fill="#9a9d9d"/><rect x="143" y="166.3" width="3.800" height="3.400" fill="#9a9d9d"/><rect x="143" y="171.4" width="3.800" height="3.400" fill="#9a9d9d"/><rect x="143" y="178.9" width="3.800" height="3.400" fill="#9a9d9d"/><rect x="147.8" y="161" width="3.800" height="3.400" fill="#9a9d9d"/><rect x="147.8" y="166.3" width="3.800" height="3.400" fill="#9a9d9d"/><rect x="147.8" y="171.4" width="3.800" height="3.400" fill="#9a9d9d"/><rect x="147.8" y="178.9" width="3.800" height="3.400" fill="#9a9d9d"/><path stroke="#a8abab" stroke-width="1.300" d="M136.700 157.700v28.600M126.800 176.200h29.300"/></svg>
<div class="abs" style="left:174px;top:159.300px;width:40px;height:26.700px;background:linear-gradient(#f58f12,#ee7e04)"></div>
<span class="t" id="rgb" style="left:181px;top:164px;font-size:13.500px;line-height:18px;color:#3a2000;letter-spacing:-.9px">RGB</span>
<svg style="left:233px;top:163px" width="28" height="20" viewBox="0 0 28 20"><rect x=".9" y=".8" width="26.100" height="18" fill="url(#gLite)"/><rect x="6.900" y=".8" width=".8" height="18" fill="#5c5e5e"/><rect x="3.600" y="7.300" width="1.500" height="5" rx=".7" fill="#222"/><circle cx="17.100" cy="9.700" r="6.100" fill="#151515"/></svg>
<span class="t" style="left:247px;top:166.800px;font-size:12px;line-height:12px;font-weight:bold;color:#e8e8e8;font-family:'Liberation Serif',serif">1</span>
<svg style="left:286px;top:160px" width="28" height="23" viewBox="0 0 28 23"><g fill="#a6a8a8"><path d="M3.200 19.500L17.500 5.200l2.800 2.800L6 22.300z"/><path d="M24.800 19.500L10.500 5.200 7.700 8 22 22.300z"/><path d="M2 6.200L7.300 1l5 2.500L9 7.200 11 9.200 8.800 11.500z"/><path fill-rule="evenodd" d="M20.500 1c2.800-.6 5.500.8 6.500 3.200l-3.700 1.300-.5 2.300 2 1.500 3-1.700c.2 3-1.800 5.200-4.800 5.400-2.800 0-5-2-5.200-4.800C17.600 5.200 18.600 2.200 20.500 1z"/></g></svg>
<div class="abs" style="left:440px;top:156.500px;width:210.500px;height:31.500px;border:1px solid #383838;border-radius:6px"></div>
<svg style="left:453.500px;top:162px" width="20" height="19" viewBox="0 0 20 19"><path fill="none" stroke="#595959" stroke-width="1.500" stroke-linejoin="round" stroke-linecap="round" d="M7.800 12V4.400c0-1.600 2.500-1.600 2.500 0v4.100V2.100c0-1.600 2.600-1.600 2.600 0v6.400V3.100c0-1.600 2.600-1.600 2.600 0v5.700V5.200c0-1.600 2.700-1.600 2.700 0v8.300c0 3-1.600 5.100-4.300 5.100H9.600c-1.600 0-2.500-.6-3.400-1.900L1.700 11c-.9-1.400.9-2.700 2-1.500z"/></svg>
<svg style="left:478.100px;top:174px" width="7" height="4" viewBox="0 0 7 4"><path fill="#777" d="M0 0h7L3.500 3.800z"/></svg>
<svg style="left:502px;top:161px" width="24" height="23" viewBox="0 0 24 23"><circle cx="13.800" cy="9.200" r="7.600" fill="none" stroke="#595959" stroke-width="2.300"/><path stroke="#595959" stroke-width="3.200" d="M8.600 14.800l-6.300 6.300"/><path stroke="#595959" stroke-width="2.200" d="M13.800 5.500v7.400M10.100 9.200h7.400"/></svg>
<svg style="left:528.500px;top:174px" width="7" height="4" viewBox="0 0 7 4"><path fill="#777" d="M0 0h7L3.500 3.800z"/></svg>
<div class="abs" style="left:536.500px;top:151.500px;width:57px;height:41px;border:3px solid #f2e60a;background:#1f1f1f"></div>
<svg style="left:553.500px;top:160px" width="24" height="23" viewBox="0 0 24 23"><use href="#pip" fill="#f08a0a" transform="translate(20.500,1.800) rotate(45) scale(1.020)"/></svg>
<div class="abs" style="left:595.500px;top:161px;width:21px;height:21px;border:1.500px solid #b8baba;background:linear-gradient(90deg,#1f1f1f 0,#1f1f1f 42%,#aaacac 42%)"></div>
<span class="t" style="left:792.500px;top:164.300px;font-size:13.500px;line-height:17px;color:#7c7c7c;letter-spacing:.4px">맞춤</span>
<svg style="left:825px;top:166px" width="15" height="13" viewBox="0 0 20.500 19"><use href="#person" fill="#a8a8a8"/></svg>
<div class="abs" style="left:848.500px;top:168.500px;width:100px;height:11.500px;border:1px solid #444;border-radius:6px"></div>
<div class="abs" style="left:848.500px;top:168.500px;width:36.500px;height:11.500px;border:1.300px solid #d8d8d8;border-radius:6px;background:#000"></div>
<div class="abs" style="left:863px;top:170.500px;width:7.500px;height:7.500px;border-radius:50%;background:#b0b0b0"></div>
<div class="abs" style="left:897.4px;top:171.500px;width:1px;height:5.500px;background:#666"></div>
<div class="abs" style="left:914.5px;top:171.500px;width:1px;height:5.500px;background:#666"></div>
<div class="abs" style="left:931px;top:171.500px;width:1px;height:5.500px;background:#666"></div>
<svg style="left:957.500px;top:163.500px" width="22" height="19" viewBox="0 0 20.500 19"><use href="#person" fill="#b4b4b4"/></svg>
<div class="hline" style="left:4px;top:202.7px;width:402px;background:#3a3a3a"></div>
<div class="abs" style="left:405px;top:203px;width:1.500px;height:659px;background:#0c0c0c"></div>
<svg style="left:17px;top:210px" width="23" height="18" viewBox="0 0 23 18"><rect x="1.800" y="2.300" width="13.500" height="13.500" fill="none" stroke="#b4b6b6" stroke-width="1.800"/><path fill="none" stroke="#b4b6b6" stroke-width="1.800" d="M15.500 8.500l5-4.500v10l-5-4.500"/></svg>
<svg style="left:52px;top:207.500px" width="23" height="19" viewBox="0 0 24 20"><g fill="none" stroke="#b4b6b6" stroke-width="1.900"><rect x="2.200" y="4.700" width="19.800" height="12.600" rx="1"/><path d="M8 4.500V1.800h8v2.700"/><circle cx="12.100" cy="11" r="3.500"/></g></svg>
<div class="hline" style="left:4px;top:233.5px;width:402px;background:#444"></div>
<div class="abs" style="left:4px;top:233.300px;width:86px;height:1.800px;background:linear-gradient(90deg,rgba(240,138,10,0) 0,#f08a0a 22%,#f08a0a 45%,rgba(240,138,10,0) 100%)"></div>
<svg style="left:21px;top:229px" width="13" height="6" viewBox="0 0 13 6"><path fill="#1f1f1f" stroke="#f08a0a" stroke-width="1.200" d="M0 5.200h2.500L6.300 1.200 10.200 5.200H13"/><path stroke="#1f1f1f" stroke-width="1.600" d="M3.300 5.700h6"/></svg>
<div class="tri-d" style="left:16px;top:241.8px"></div><span class="hdr"  style="left:34px;top:240.1px">라이브뷰 탐색창</span><span class="q" style="left:364.2px;top:239.4px">?</span><div class="dots" style="left:384.8px;top:243.4px"><i style="left:0"></i><i style="left:4.100px"></i><i style="left:8.200px"></i></div>
<div class="abs" style="left:4px;top:259px;width:401px;height:325px;background:#000"></div>
<svg style="left:4px;top:288.500px" width="401" height="267"><use href="#photo" width="401" height="267"/></svg>
<div class="abs" style="left:129px;top:588.500px;width:150px;height:20.500px;border:1px solid #4c4c4c;border-radius:5px"></div>
<span class="t" id="refresh" style="left:182px;top:591.7px;font-size:12px;line-height:17px;font-weight:bold;color:#e6e6e6;letter-spacing:-.6px">새로 고침</span>
<div class="hline" style="left:4px;top:625.7px;width:402px;background:#3a3a3a"></div>
<div class="tri-d" style="left:16px;top:633.5px"></div><span class="hdr"  style="left:34px;top:631.8px">라이브뷰 컨트롤</span><span class="q" style="left:364.2px;top:631.4px">?</span><div class="dots" style="left:384.8px;top:635.4px"><i style="left:0"></i><i style="left:4.100px"></i><i style="left:8.200px"></i></div>
<span class="t sl" style="left:78.500px;top:663.5px">명도</span><div class="abs" style="left:124px;top:670.3px;width:199px;height:2.500px;background:#484848"></div><div class="abs" style="left:212.800px;top:663.3px;width:22.400px;height:16px;border:1.500px solid #404040;border-radius:4.500px;background:rgba(31,31,31,.35)"></div><div class="abs" style="left:223.500px;top:667.8px;width:1px;height:7px;background:#333"></div><div class="abs" style="left:344.500px;top:661.8px;width:50px;height:21.400px;border-radius:6px;background:#000"></div><span class="t" style="left:379.700px;top:664.6px;font-size:15px;line-height:14px;font-weight:bold;color:#4c4c4c;letter-spacing:1.300px">--</span>
<span class="t sl" style="left:78.500px;top:692.4px">품질</span><div class="abs" style="left:124px;top:699.2px;width:199px;height:2.500px;background:#484848"></div><div class="abs" style="left:212.800px;top:692.2px;width:22.400px;height:16px;border:1.500px solid #404040;border-radius:4.500px;background:rgba(31,31,31,.35)"></div><div class="abs" style="left:223.500px;top:696.7px;width:1px;height:7px;background:#333"></div><div class="abs" style="left:344.500px;top:690.7px;width:50px;height:21.400px;border-radius:6px;background:#000"></div><span class="t" style="left:379.700px;top:693.5px;font-size:15px;line-height:14px;font-weight:bold;color:#4c4c4c;letter-spacing:1.300px">--</span>
<span class="t sl" style="left:78.500px;top:721.7px">초점</span>
<div class="abs fb" style="left:124.3px;top:719.500px;width:32.5px">&lt;&lt;&lt;</div>
<div class="abs fb" style="left:158.3px;top:719.500px;width:31.7px">&lt;&lt;</div>
<div class="abs fb" style="left:191.6px;top:719.500px;width:31.3px">&lt;</div>
<div class="abs fb" style="left:224.4px;top:719.500px;width:31.8px">&gt;</div>
<div class="abs fb" style="left:257.7px;top:719.500px;width:31.9px">&gt;&gt;</div>
<div class="abs fb" style="left:290.5px;top:719.500px;width:32.5px">&gt;&gt;&gt;</div>
<div class="abs fb" style="left:345px;top:719.500px;width:49.500px;font-size:13px;letter-spacing:-.2px">DOF</div>
<div class="hline" style="left:4px;top:751.5px;width:402px;background:#3a3a3a"></div>
<div class="hline" style="left:4px;top:776.6px;width:402px;background:#3a3a3a"></div>
<div class="hline" style="left:4px;top:801.8px;width:402px;background:#3a3a3a"></div>
<div class="tri-r" style="left:17px;top:759.5px"></div><span class="hdr"  style="left:34px;top:758.3px">라이브뷰 정보</span><span class="q" style="left:364.2px;top:757.9px">?</span><div class="dots" style="left:384.8px;top:761.9px"><i style="left:0"></i><i style="left:4.100px"></i><i style="left:8.200px"></i></div>
<div class="tri-r" style="left:17px;top:784.7px"></div><span class="hdr"  style="left:34px;top:783.5px">라이브뷰 포커스 미터</span><span class="q" style="left:364.2px;top:782.9px">?</span><div class="dots" style="left:384.8px;top:786.9px"><i style="left:0"></i><i style="left:4.100px"></i><i style="left:8.200px"></i></div>
<div class="tri-r" style="left:17px;top:809.8px"></div><span class="hdr"  style="left:34px;top:808.6px">오버레이</span><span class="q" style="left:364.2px;top:807.9px">?</span><div class="dots" style="left:384.8px;top:811.9px"><i style="left:0"></i><i style="left:4.100px"></i><i style="left:8.200px"></i></div>
<svg style="left:406px;top:338.500px" width="586.500" height="389.500"><use href="#photo" width="586.500" height="389.500"/><rect width="586.500" height="389.500" fill="url(#bigshade)"/></svg>

<!-- dialog.html -->
<div class="abs" style="left:673px;top:268px;width:554px;height:201px;background:#ececec;border-radius:6px;box-shadow:0 0 0 1px rgba(0,0,0,.3),0 22px 26px -8px rgba(0,0,0,.6),0 5px 12px rgba(0,0,0,.28)"></div>
<div class="abs" style="left:673px;top:268px;width:554px;height:29px;border-radius:6px 6px 0 0;background:linear-gradient(#ebebeb,#d3d3d3);border-bottom:1px solid #b4b4b4"></div>
<svg style="left:706px;top:320px" width="82" height="82" viewBox="0 0 82 82">
<defs>
<linearGradient id="c1ring" x1="0" y1="0" x2="0" y2="1"><stop offset="0" stop-color="#cfd4d4"/><stop offset="1" stop-color="#8a8f8f"/></linearGradient>
<linearGradient id="c1blue" x1=".25" y1="0" x2=".75" y2="1"><stop offset="0" stop-color="#00bdff"/><stop offset=".5" stop-color="#0a9df0"/><stop offset="1" stop-color="#0458c0"/></linearGradient>
<linearGradient id="c1dark" x1="0" y1="0" x2="0" y2="1"><stop offset="0" stop-color="#3a4050"/><stop offset=".5" stop-color="#30323e"/><stop offset="1" stop-color="#2a2a34"/></linearGradient>
<clipPath id="c1clip"><circle cx="40.700" cy="39.500" r="23.700"/></clipPath>
</defs>
<circle cx="41" cy="40.700" r="39.300" fill="url(#c1ring)"/>
<circle cx="41" cy="40.700" r="37.300" fill="url(#c1dark)"/>
<circle cx="41" cy="40.700" r="31.700" fill="url(#c1blue)"/>
<circle cx="40.700" cy="39.500" r="23.700" fill="url(#c1dark)"/>
<g clip-path="url(#c1clip)"><path fill="url(#c1blue)" d="M34.800 10h12.400v43H53v12H29.200V53h5.600V28h-4.200v-6.500c0-2.500 1.800-3.800 4.200-4.500z"/></g>
</svg>
<div class="t" id="dlgtxt" style="left:812.500px;top:319px;width:400px;white-space:normal;font-size:16.800px;line-height:23px;font-weight:bold;color:#111;letter-spacing:-.35px">이 카메라/모드에서 라이브뷰 화이트밸런스를 설정할 수<br>없습니다.</div>
<div class="abs" style="left:1097px;top:418px;width:103px;height:26.500px;border-radius:4px;background:linear-gradient(#b0b0b2,#8f8f91);box-shadow:0 0 0 .5px #8a8a8a,0 1px 1px rgba(0,0,0,.25)"></div>
<span class="t" id="okbtn" style="left:1132px;top:420.500px;font-size:17.500px;line-height:22px;color:#ececec;letter-spacing:-.8px">승인</span>

</body></html>
